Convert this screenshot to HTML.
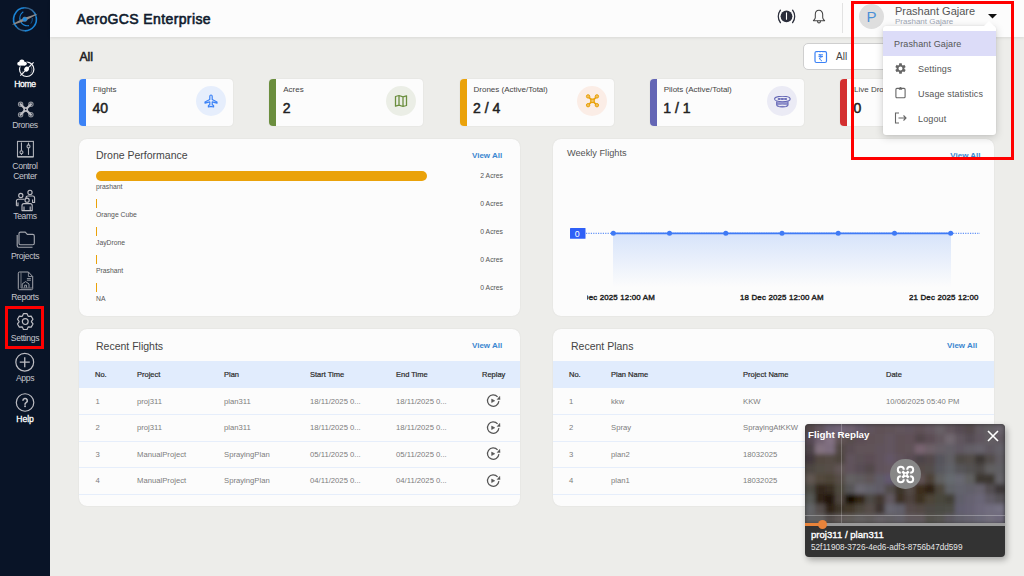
<!DOCTYPE html>
<html><head><meta charset="utf-8">
<style>
*{margin:0;padding:0;box-sizing:border-box}
html,body{width:1024px;height:576px;overflow:hidden}
body{position:relative;background:#ededea;font-family:"Liberation Sans",sans-serif;color:#333}
.a{position:absolute;white-space:nowrap}
#side{position:absolute;left:0;top:0;width:50px;height:576px;background:#091427}
.sl{position:absolute;left:0;width:50px;text-align:center;font-size:8.6px;color:#c6c6cc;line-height:10px;letter-spacing:-0.35px}
.sl.w{color:#fff;font-weight:bold}
#hdr{position:absolute;left:50px;top:0;width:974px;height:37px;background:#fcfcfc;box-shadow:0 1px 3px rgba(0,0,0,0.09)}
.card{position:absolute;top:79px;width:154px;height:47px;background:#fcfcfc;border-radius:4px;overflow:hidden;box-shadow:0 0 1.5px rgba(0,0,0,0.10)}
.card .bar{position:absolute;left:0;top:0;width:7px;height:47px}
.card .lb{position:absolute;left:14px;top:6px;font-size:8px;color:#444;white-space:nowrap}
.card .vl{position:absolute;left:13.5px;top:21.3px;font-size:14px;color:#222;-webkit-text-stroke:0.5px #222;white-space:nowrap}
.card .ic{position:absolute;left:117px;top:7px;width:30px;height:30px;border-radius:50%}
.pnl{position:absolute;background:#fcfcfc;border-radius:8px;overflow:hidden;box-shadow:0 0 1.5px rgba(0,0,0,0.10)}
.ptitle{position:absolute;font-size:10.5px;color:#444;white-space:nowrap}
.va{position:absolute;font-size:8px;font-weight:bold;color:#3a86d0;white-space:nowrap}
table{border-collapse:collapse}
.th{position:absolute;left:0;top:32px;height:27px;background:#e1ecfd}
.row{position:absolute;left:0;height:27px;border-bottom:1px solid #e6eefb}
.t{position:absolute;font-size:7.5px;white-space:nowrap}
.t.h{font-weight:normal;color:#2a2a2a;-webkit-text-stroke:0.2px #2a2a2a}
.t.d{color:#7c7c7c;font-size:7.7px}
.dl{font-size:6.8px;color:#555}
.dr{right:521px;font-size:6.8px;color:#555}
.xl{font-size:7.9px;color:#222;-webkit-text-stroke:0.4px #222;letter-spacing:0.17px}
.dd{font-size:9px;color:#555;letter-spacing:0.13px}
</style></head><body>

<!-- SIDEBAR -->
<div id="side">
  <svg class="a" style="left:8px;top:2px" width="34" height="34" viewBox="0 0 34 34">
    <defs>
      <linearGradient id="lgA" gradientUnits="userSpaceOnUse" x1="12" y1="6" x2="28" y2="14"><stop offset="0" stop-color="#1a84d6"/><stop offset="0.5" stop-color="#3c5c7e"/><stop offset="1" stop-color="#1a84d6"/></linearGradient>
      <linearGradient id="lgB" gradientUnits="userSpaceOnUse" x1="6" y1="24" x2="18" y2="30"><stop offset="0" stop-color="#1a84d6"/><stop offset="0.6" stop-color="#3c5c7e"/><stop offset="1" stop-color="#1a84d6"/></linearGradient>
    </defs>
    <path d="M8.8 25.3 A11.6 11.6 0 0 1 16.8 5.7" fill="none" stroke="#1a84d6" stroke-width="1.6"/>
    <path d="M16.8 5.7 A11.6 11.6 0 0 1 28.1 14.6" fill="none" stroke="url(#lgA)" stroke-width="1.5"/>
    <path d="M28.1 14.6 A11.6 11.6 0 0 1 17 28.85" fill="none" stroke="#1a84d6" stroke-width="1.6"/>
    <path d="M17 28.85 A11.6 11.6 0 0 1 8.8 25.3" fill="none" stroke="url(#lgB)" stroke-width="1.5"/>
    <path d="M15.3 9.8 A7.6 7.6 0 0 0 21 23.6" fill="none" stroke="#1a84d6" stroke-width="1.2"/>
    <path d="M22.8 21.6 A7.6 7.6 0 0 0 24.3 16" fill="none" stroke="#1a6fb5" stroke-width="1" opacity=".7"/>
    <path d="M3.90 22.80 L6.89 22.18 L14.55 19.67 L17.33 18.54 L20.07 17.32 L27.18 13.53 L29.70 11.80 L26.71 12.42 L19.05 14.93 L16.27 16.06 L13.53 17.28 L6.42 21.07z" fill="#8f8a87"/>
    <circle cx="16.8" cy="17.3" r="2.3" fill="#1f8ce0" stroke="#7d8a98" stroke-width="0.5"/>
  </svg>
  <!-- home -->
  <svg class="a" style="left:14px;top:56px" width="24" height="24" viewBox="0 0 24 24">
    <circle cx="12.7" cy="13.3" r="7.2" fill="none" stroke="#f2f2f4" stroke-width="1.2"/>
    <path d="M16.3 9.8 A5 5 0 0 1 16.5 17.2" fill="none" stroke="#aaa" stroke-width=".6"/>
    <path d="M8.2 15 A5 5 0 0 0 10 18" fill="none" stroke="#888" stroke-width=".5"/>
    <line x1="6.3" y1="19.6" x2="19.6" y2="6.3" stroke="#f2f2f4" stroke-width="1.1"/>
    <ellipse cx="12.6" cy="13.2" rx="2.6" ry="2.3" transform="rotate(-45 12.6 13.2)" fill="#fff"/>
    <g fill="#091427" stroke="#091427" stroke-width="1.6"><circle cx="5.2" cy="7.7" r="1.9"/><circle cx="7.9" cy="6.2" r="2.6"/><circle cx="10.9" cy="7.6" r="1.9"/><rect x="5.2" y="7.6" width="5.7" height="2"/></g>
    <g fill="#fff"><circle cx="5.2" cy="7.7" r="1.9"/><circle cx="7.9" cy="6.2" r="2.6"/><circle cx="10.9" cy="7.6" r="1.9"/><rect x="5.2" y="7.6" width="5.7" height="2"/></g>
  </svg>
  <div class="sl w" style="top:78.7px;font-size:8.6px;font-weight:normal;-webkit-text-stroke:0.3px #fff;letter-spacing:-0.3px">Home</div>
  <!-- drones -->
  <svg class="a" style="left:14px;top:98px" width="24" height="22" viewBox="0 0 24 22" fill="none">
    <g stroke="#8a8e96" stroke-width="1.1"><circle cx="6.6" cy="6.3" r="2.2"/><circle cx="16.9" cy="6.3" r="2.2"/><circle cx="6.6" cy="16.7" r="2.2"/><circle cx="16.9" cy="16.7" r="2.2"/></g>
    <path d="M6.6 6.3 L16.9 16.7 M16.9 6.3 L6.6 16.7" stroke="#bdbdc3" stroke-width="2.3" stroke-linecap="round"/>
    <rect x="9.4" y="9.2" width="4.6" height="4.6" rx="1.2" fill="#bdbdc3"/>
    <circle cx="11.7" cy="11.5" r=".8" fill="#091427"/>
  </svg>
  <div class="sl" style="top:120.2px">Drones</div>
  <!-- control center -->
  <svg class="a" style="left:14px;top:138px" width="24" height="22" viewBox="0 0 24 22" fill="none" stroke="#b0b2b9" stroke-width="1.1">
    <rect x="3.5" y="3.4" width="15.9" height="15.3"/>
    <path d="M3.5 18.9 H19.4" stroke-width="1.3"/>
    <line x1="7.45" y1="4.6" x2="7.45" y2="16.9"/><line x1="14.5" y1="4.6" x2="14.5" y2="16.9"/>
    <circle cx="7.45" cy="14.3" r="1.5" fill="#091427"/><circle cx="14.5" cy="8.4" r="1.5" fill="#091427"/>
  </svg>
  <div class="sl" style="top:160.7px;line-height:10px">Control<br>Center</div>
  <!-- teams -->
  <svg class="a" style="left:13px;top:186px" width="26" height="28" viewBox="0 0 26 28" fill="none" stroke="#bdbdc3" stroke-width="1.1" stroke-linejoin="round">
    <circle cx="7.8" cy="9.5" r="2.1"/><circle cx="17" cy="6.4" r="2.1"/>
    <path d="M3.4 19.8 V15.2 Q3.4 13.2 5.4 13.2 H11.5"/><path d="M3.4 19.8 H5 V16.6"/>
    <path d="M13 12.2 V11.9 Q13 10 15 10 H19.6 Q21.6 10 21.6 12 V16.5 H19.6 V13.4"/>
    <path d="M9 24.6 V19.6 Q9 17.6 11 17.6 H17.2 Q19.2 17.6 19.2 19.6 V24.6 Z" fill="#091427"/>
    <path d="M11 20.6 V24.6 M17.2 20.6 V24.6"/>
    <circle cx="14.1" cy="14.2" r="2.1" fill="#091427"/>
  </svg>
  <div class="sl" style="top:211.2px">Teams</div>
  <!-- projects -->
  <svg class="a" style="left:12px;top:226px" width="28" height="26" viewBox="0 0 28 26" fill="none" stroke="#a2a5ad" stroke-width="1.15" stroke-linejoin="round">
    <path d="M8.5 6.1 H13.3 L15.3 8.4 H20.8 Q22.3 8.4 22.3 9.9 V17.2 Q22.3 18.7 20.8 18.7 H8.5 Q7 18.7 7 17.2 V7.6 Q7 6.1 8.5 6.1 Z"/>
    <path d="M5.2 9 V19.7 Q5.2 21.2 6.7 21.2 H20.5"/>
  </svg>
  <div class="sl" style="top:251.2px">Projects</div>
  <!-- reports -->
  <svg class="a" style="left:14px;top:268px" width="24" height="26" viewBox="0 0 24 26" fill="none" stroke="#a4a6ad" stroke-width="1" stroke-linejoin="round">
    <path d="M5.5 4 H14.4 L18.7 8.5 V20.5 Q18.7 21.7 17.5 21.7 H5.5 Q4.3 21.7 4.3 20.5 V5.2 Q4.3 4 5.5 4 Z"/>
    <path d="M7 4.6 V20 H18.2" stroke-width=".8" stroke="#8d9098"/>
    <path d="M14.4 4.2 V8.5 H18.5" stroke-width=".8"/>
    <path d="M12.9 10.6 H16.9 M12.9 12.2 H16.9" stroke-width=".9"/>
    <path d="M8.2 19.6 V15.9 L11.6 13.6 L15 15.9 V19.6 M10.7 19.6 V17.2 H12.5 V19.6" stroke-width=".9"/>
  </svg>
  <div class="sl" style="top:292.2px">Reports</div>
  <!-- settings -->
  <div class="a" style="left:5px;top:306px;width:39px;height:43px;border:3px solid #ff0000"></div>
  <svg class="a" style="left:14px;top:310px" width="23" height="23" viewBox="0 0 23 23" fill="none" stroke="#bdbdc3" stroke-width="1.2" stroke-linejoin="round">
    <path d="M8.44 6.08 L9.43 3.71 L13.07 3.71 L14.06 6.08 L14.63 6.40 L17.17 6.08 L19.00 9.23 L17.44 11.28 L17.44 11.92 L19.00 13.97 L17.17 17.12 L14.63 16.80 L14.06 17.12 L13.07 19.49 L9.43 19.49 L8.44 17.12 L7.87 16.80 L5.33 17.12 L3.50 13.97 L5.06 11.92 L5.06 11.28 L3.50 9.23 L5.33 6.08 L7.87 6.40z"/>
    <circle cx="11.25" cy="11.6" r="2.9"/>
  </svg>
  <div class="sl" style="top:333.2px">Settings</div>
  <!-- apps -->
  <svg class="a" style="left:14px;top:351px" width="22" height="22" viewBox="0 0 22 22" fill="none" stroke="#bdbdc3" stroke-width="1.2">
    <circle cx="10.75" cy="11.2" r="8.9"/><path d="M10.75 6.2v10M5.75 11.2h10" stroke-width="1.3"/>
  </svg>
  <div class="sl" style="top:373.2px">Apps</div>
  <!-- help -->
  <svg class="a" style="left:14px;top:392px" width="22" height="22" viewBox="0 0 22 22" fill="none" stroke="#bdbdc3" stroke-width="1.2">
    <circle cx="11.05" cy="10.5" r="8.75"/>
    <path d="M8.9 8.7a2.2 2.2 0 1 1 3.2 1.95c-.65.35-1.05.8-1.05 1.6v.45" stroke-width="1.6"/>
    <circle cx="11.05" cy="14.3" r=".95" fill="#bdbdc3" stroke="none"/>
  </svg>
  <div class="sl w" style="top:413.7px;font-size:8.6px;font-weight:normal;-webkit-text-stroke:0.3px #fff;letter-spacing:-0.1px">Help</div>
</div>

<!-- HEADER -->
<div id="hdr"></div>
<div class="a" style="left:76.5px;top:11px;font-size:14px;color:#0f1b2d;-webkit-text-stroke:0.6px #0f1b2d;letter-spacing:0.38px">AeroGCS Enterprise</div>

<!-- MAIN CONTENT -->
<div class="a" style="left:79.5px;top:50px;font-size:12.3px;color:#222;-webkit-text-stroke:0.55px #222;letter-spacing:-0.1px">All</div>


<!-- header right -->
<svg class="a" style="left:776px;top:8px" width="21" height="17" viewBox="0 0 21 17">
  <path d="M4.4 2.2 A10.4 10.4 0 0 0 4.4 14.6" fill="none" stroke="#2a2d3a" stroke-width="1.35" stroke-linecap="round"/>
  <path d="M16.6 2.2 A10.4 10.4 0 0 1 16.6 14.6" fill="none" stroke="#2a2d3a" stroke-width="1.35" stroke-linecap="round"/>
  <circle cx="10.5" cy="8.3" r="5.9" fill="#2a2d3a"/>
  <path d="M10.5 4.9 V11.2" stroke="#fff" stroke-width="1.1" stroke-linecap="round"/>
</svg>
<svg class="a" style="left:811px;top:8px" width="16" height="16" viewBox="0 0 16 16" fill="none" stroke="#444" stroke-width="1.05" stroke-linejoin="round">
  <path d="M8 2.3 C5.6 2.3 4.3 4.2 4.3 6.6 V9.4 C4.3 10.8 3.3 11.6 2.4 12.7 H13.6 C12.7 11.6 11.7 10.8 11.7 9.4 V6.6 C11.7 4.2 10.4 2.3 8 2.3z"/>
  <path d="M6.6 12.8 V13.5 a1.4 1.4 0 0 0 2.8 0 V12.8"/>
</svg>
<div class="a" style="left:842px;top:3px;width:1px;height:30px;background:#e2e2e2"></div>
<div class="a" style="left:859px;top:4px;width:25px;height:25px;border-radius:50%;background:#dedede;color:#4a8fd6;font-size:15px;text-align:center;line-height:25px">P</div>
<div class="a" style="left:895px;top:5px;font-size:11px;color:#555">Prashant Gajare</div>
<div class="a" style="left:895px;top:17px;font-size:8px;color:#9ea6b4">Prashant Gajare</div>
<svg class="a" style="left:988px;top:14px" width="9" height="5" viewBox="0 0 9 5"><path d="M0 0h9L4.5 4.5z" fill="#111"/></svg>

<!-- date filter button -->
<div class="a" style="left:803px;top:43px;width:150px;height:26.5px;border:1px solid #cfcfcf;border-radius:5px;background:#fff"></div>
<svg class="a" style="left:814px;top:50px" width="14" height="14" viewBox="0 0 14 14" fill="none" stroke="#3b82f6" stroke-width="1.2">
  <rect x="1" y="1.5" width="11.5" height="11" rx="1.5"/>
  <path d="M3 1 v1.5 M6 1 v1.5 M9 1 v1.5 M11 1 v1.5" stroke-width="0.8"/>
  <path d="M4.5 4.8 h4.5 M4.5 6.6 h4.5 M5 4.8 c3 0 3 3.6 0 3.6 l3 2.8" stroke-width="1"/>
</svg>
<div class="a" style="left:836px;top:51px;font-size:10px;color:#444">All</div>

<!-- stat cards -->
<div class="card" style="left:79px"><div class="bar" style="background:#3b82f6"></div><div class="lb">Flights</div><div class="vl">40</div>
  <div class="ic" style="background:#e6eefc"><svg class="a" style="left:8px;top:8px" width="14" height="14" viewBox="0 0 14 14" fill="none" stroke="#3b82f6" stroke-width="1.2" stroke-linejoin="round"><path d="M7 1 c.8 0 1.2.7 1.2 1.5 V5.5 L13 8 v1.2 l-4.8-1.3 v2.6 l1.4 1.2 V13 L7 12.3 4.4 13 v-1.3 l1.4-1.2 V7.9 L1 9.2 V8 l4.8-2.5 V2.5 C5.8 1.7 6.2 1 7 1z"/></svg></div></div>
<div class="card" style="left:269.25px"><div class="bar" style="background:#6b8e3e"></div><div class="lb">Acres</div><div class="vl">2</div>
  <div class="ic" style="background:#ebeee6"><svg class="a" style="left:8px;top:8px" width="14" height="14" viewBox="0 0 14 14" fill="none" stroke="#6b8e3e" stroke-width="1.3" stroke-linejoin="round"><path d="M1.5 2.5 l3.5-1 4 1.3 3.5-1 v9.7 l-3.5 1-4-1.3-3.5 1z M5 1.5 v9.7 M9 2.8 v9.7"/></svg></div></div>
<div class="card" style="left:459.5px"><div class="bar" style="background:#eaa20a"></div><div class="lb">Drones (Active/Total)</div><div class="vl">2 / 4</div>
  <div class="ic" style="background:#fbede6"><svg class="a" style="left:7px;top:7px" width="17" height="16" viewBox="0 0 17 16" fill="none" stroke="#eaa20a"><path d="M4.3 3.6 L12.7 12 M12.7 3.6 L4.3 12" stroke-width="1.7"/><g fill="#f0bf5c" stroke-width="1"><circle cx="4.1" cy="3.4" r="1.7"/><circle cx="12.9" cy="3.4" r="1.7"/><circle cx="4.1" cy="12.2" r="1.7"/><circle cx="12.9" cy="12.2" r="1.7"/></g><rect x="6.8" y="6.1" width="3.4" height="3.4" stroke-width="1.2" fill="#f0c66c"/></svg></div></div>
<div class="card" style="left:649.75px"><div class="bar" style="background:#6466b5"></div><div class="lb">Pilots (Active/Total)</div><div class="vl">1 / 1</div>
  <div class="ic" style="background:#ebebf5"><svg class="a" style="left:6px;top:9.5px" width="18" height="13" viewBox="0 0 18 13" fill="none" stroke="#6466b5" stroke-width="1.1"><path d="M3.7 5.6 V8.8 Q3.7 10.9 9.35 10.9 Q15 10.9 15 8.8 V5.6" fill="#b0b1dc"/><path d="M3.9 7 H14.8 M3.9 8.1 H14.8" stroke-width=".6" stroke="#6466b5"/><path d="M5.6 9.7 Q9.35 8.9 13.1 9.7" stroke="#ebebf5" stroke-width="1.1"/><ellipse cx="9.35" cy="3" rx="7.8" ry="2.7" fill="#ebebf5"/><rect x="4.6" y="2" width="9.5" height="2" rx="1" fill="#7072bb" stroke="none"/><circle cx="7.7" cy="3" r=".55" fill="#ebebf5" stroke="none"/><circle cx="11" cy="3" r=".55" fill="#ebebf5" stroke="none"/></svg></div></div>
<div class="card" style="left:840px"><div class="bar" style="background:#d32f2f"></div><div class="lb">Live Drones</div><div class="vl">0</div></div>


<!-- Drone Performance -->
<div class="pnl" style="left:79px;top:139px;width:440.5px;height:177px"></div>
<div class="ptitle" style="left:96px;top:149px">Drone Performance</div>
<div class="va" style="left:472px;top:151px">View All</div>
<div class="a" style="left:96px;top:171px;width:331px;height:10px;border-radius:5px;background:#eaa20a"></div>
<div class="a" style="left:96px;top:199px;width:1px;height:9px;background:#eaa20a"></div>
<div class="a" style="left:96px;top:227px;width:1px;height:9px;background:#eaa20a"></div>
<div class="a" style="left:96px;top:255px;width:1px;height:9px;background:#eaa20a"></div>
<div class="a" style="left:96px;top:283px;width:1px;height:9px;background:#eaa20a"></div>
<div class="a dl" style="left:96px;top:183px">prashant</div>
<div class="a dl" style="left:96px;top:211px">Orange Cube</div>
<div class="a dl" style="left:96px;top:239px">JayDrone</div>
<div class="a dl" style="left:96px;top:267px">Prashant</div>
<div class="a dl" style="left:96px;top:295px">NA</div>
<div class="a dr" style="top:172px">2 Acres</div>
<div class="a dr" style="top:200px">0 Acres</div>
<div class="a dr" style="top:228px">0 Acres</div>
<div class="a dr" style="top:256px">0 Acres</div>
<div class="a dr" style="top:284px">0 Acres</div>

<!-- Weekly Flights -->
<div class="pnl" style="left:553.3px;top:139px;width:440.5px;height:177px"></div>
<div class="a" style="left:567px;top:148px;font-size:9.2px;color:#555">Weekly Flights</div>
<div class="va" style="left:950.3px;top:151px">View All</div>
<svg class="a" style="left:553px;top:139px" width="441" height="177" viewBox="0 0 441 177">
  <defs><linearGradient id="gr" x1="0" y1="0" x2="0" y2="1"><stop offset="0" stop-color="#d6e3fa"/><stop offset="1" stop-color="#fcfcfc"/></linearGradient></defs>
  <rect x="60" y="94" width="338" height="54" fill="url(#gr)"/>
  <line x1="33" y1="94.3" x2="427" y2="94.3" stroke="#3f7af5" stroke-width="1" stroke-dasharray="1.2 1.2"/>
  <line x1="60" y1="94.3" x2="398" y2="94.3" stroke="#3f7af5" stroke-width="1.8"/>
  <g fill="#3f7af5"><circle cx="60.3" cy="94.3" r="2.5"/><circle cx="116.5" cy="94.3" r="2.5"/><circle cx="172.8" cy="94.3" r="2.5"/><circle cx="229" cy="94.3" r="2.5"/><circle cx="285.2" cy="94.3" r="2.5"/><circle cx="341.5" cy="94.3" r="2.5"/><circle cx="397.7" cy="94.3" r="2.5"/></g>
  <rect x="17" y="89" width="15.5" height="10.8" rx="0.5" fill="#2f60f7"/>
  <text x="24.2" y="97.6" font-size="8.8" fill="#fff" text-anchor="middle" font-family="Liberation Sans">0</text>
</svg>
<div class="a" style="left:587px;top:290.8px;width:68px;height:14px;overflow:hidden"><div class="a xl" style="right:0;top:2px">18 Dec 2025 12:00 AM</div></div>
<div class="a xl" style="left:740px;top:292.8px">18 Dec 2025 12:00 AM</div>
<div class="a xl" style="left:909px;top:292.8px;width:70px;overflow:hidden">21 Dec 2025 12:00 AM</div>

<!-- Recent Flights -->
<div class="pnl" style="left:79px;top:329px;width:440.5px;height:177px">
  <div class="th" style="width:441px"></div>
  <div class="row" style="top:59px;width:441px"></div>
  <div class="row" style="top:86px;width:441px"></div>
  <div class="row" style="top:112px;width:441px"></div>
  <div class="row" style="top:139px;width:441px"></div>
</div>
<div class="ptitle" style="left:96px;top:340px">Recent Flights</div>
<div class="va" style="left:472px;top:341px">View All</div>


<div class="t h" style="left:95px;top:370px">No.</div>
<div class="t h" style="left:137px;top:370px">Project</div>
<div class="t h" style="left:224px;top:370px">Plan</div>
<div class="t h" style="left:310px;top:370px">Start Time</div>
<div class="t h" style="left:396px;top:370px">End Time</div>
<div class="t h" style="left:482px;top:370px">Replay</div>
<div class="t d" style="left:95.5px;top:396.5px">1</div><div class="t d" style="left:137px;top:396.5px">proj311</div><div class="t d" style="left:224px;top:396.5px">plan311</div><div class="t d" style="left:310px;top:396.5px">18/11/2025 0...</div><div class="t d" style="left:396px;top:396.5px">18/11/2025 0...</div><svg class="a" style="left:486px;top:394px" width="15" height="14" viewBox="0 0 15 14" fill="none" stroke="#555" stroke-width="1.25"><path d="M12.88 7.1 A5.7 5.7 0 1 1 11.57 2.94"/><path d="M11.1 5.6 L14.1 5.6 L13.8 2.2z" fill="#555" stroke="#555" stroke-width="0.4" stroke-linejoin="round"/><path d="M5.6 5 L5.6 8.6 L8.8 6.8z" fill="#555" stroke="#555" stroke-width="0.5" stroke-linejoin="round"/></svg>
<div class="t d" style="left:95.5px;top:423.1px">2</div><div class="t d" style="left:137px;top:423.1px">proj311</div><div class="t d" style="left:224px;top:423.1px">plan311</div><div class="t d" style="left:310px;top:423.1px">18/11/2025 0...</div><div class="t d" style="left:396px;top:423.1px">18/11/2025 0...</div><svg class="a" style="left:486px;top:420.6px" width="15" height="14" viewBox="0 0 15 14" fill="none" stroke="#555" stroke-width="1.25"><path d="M12.88 7.1 A5.7 5.7 0 1 1 11.57 2.94"/><path d="M11.1 5.6 L14.1 5.6 L13.8 2.2z" fill="#555" stroke="#555" stroke-width="0.4" stroke-linejoin="round"/><path d="M5.6 5 L5.6 8.6 L8.8 6.8z" fill="#555" stroke="#555" stroke-width="0.5" stroke-linejoin="round"/></svg>
<div class="t d" style="left:95.5px;top:449.7px">3</div><div class="t d" style="left:137px;top:449.7px">ManualProject</div><div class="t d" style="left:224px;top:449.7px">SprayingPlan</div><div class="t d" style="left:310px;top:449.7px">05/11/2025 0...</div><div class="t d" style="left:396px;top:449.7px">05/11/2025 0...</div><svg class="a" style="left:486px;top:447.2px" width="15" height="14" viewBox="0 0 15 14" fill="none" stroke="#555" stroke-width="1.25"><path d="M12.88 7.1 A5.7 5.7 0 1 1 11.57 2.94"/><path d="M11.1 5.6 L14.1 5.6 L13.8 2.2z" fill="#555" stroke="#555" stroke-width="0.4" stroke-linejoin="round"/><path d="M5.6 5 L5.6 8.6 L8.8 6.8z" fill="#555" stroke="#555" stroke-width="0.5" stroke-linejoin="round"/></svg>
<div class="t d" style="left:95.5px;top:476.3px">4</div><div class="t d" style="left:137px;top:476.3px">ManualProject</div><div class="t d" style="left:224px;top:476.3px">SprayingPlan</div><div class="t d" style="left:310px;top:476.3px">04/11/2025 0...</div><div class="t d" style="left:396px;top:476.3px">04/11/2025 0...</div><svg class="a" style="left:486px;top:473.8px" width="15" height="14" viewBox="0 0 15 14" fill="none" stroke="#555" stroke-width="1.25"><path d="M12.88 7.1 A5.7 5.7 0 1 1 11.57 2.94"/><path d="M11.1 5.6 L14.1 5.6 L13.8 2.2z" fill="#555" stroke="#555" stroke-width="0.4" stroke-linejoin="round"/><path d="M5.6 5 L5.6 8.6 L8.8 6.8z" fill="#555" stroke="#555" stroke-width="0.5" stroke-linejoin="round"/></svg>

<!-- Recent Plans -->
<div class="pnl" style="left:553.3px;top:329px;width:440.5px;height:177px">
  <div class="th" style="width:441px"></div>
  <div class="row" style="top:59px;width:441px"></div>
  <div class="row" style="top:86px;width:441px"></div>
  <div class="row" style="top:112px;width:441px"></div>
  <div class="row" style="top:139px;width:441px"></div>
</div>
<div class="ptitle" style="left:571px;top:340px">Recent Plans</div>
<div class="va" style="left:947px;top:341px">View All</div>
<div class="t h" style="left:569px;top:370px">No.</div>
<div class="t h" style="left:611px;top:370px">Plan Name</div>
<div class="t h" style="left:743px;top:370px">Project Name</div>
<div class="t h" style="left:886px;top:370px">Date</div>
<div class="t d" style="left:569px;top:396.5px">1</div><div class="t d" style="left:611px;top:396.5px">kkw</div><div class="t d" style="left:743px;top:396.5px">KKW</div><div class="t d" style="left:886px;top:396.5px">10/06/2025 05:40 PM</div>
<div class="t d" style="left:569px;top:423.1px">2</div><div class="t d" style="left:611px;top:423.1px">Spray</div><div class="t d" style="left:743px;top:423.1px">SprayingAtKKW</div>
<div class="t d" style="left:569px;top:449.7px">3</div><div class="t d" style="left:611px;top:449.7px">plan2</div><div class="t d" style="left:743px;top:449.7px">18032025</div>
<div class="t d" style="left:569px;top:476.3px">4</div><div class="t d" style="left:611px;top:476.3px">plan1</div><div class="t d" style="left:743px;top:476.3px">18032025</div>

<!-- dropdown -->
<div class="a" style="left:883px;top:26px;width:113px;height:109px;background:#fff;border-radius:3px;box-shadow:0 2px 8px rgba(0,0,0,0.18), 0 0 2px rgba(0,0,0,0.08)"></div>
<svg class="a" style="left:982px;top:20px" width="14" height="7" viewBox="0 0 14 7"><path d="M1 7 L7 1 L13 7z" fill="#fff"/></svg>
<div class="a" style="left:883px;top:31px;width:113px;height:25px;background:#dcdcf8"></div>
<div class="a dd" style="left:894px;top:39px">Prashant Gajare</div>
<svg class="a" style="left:893.5px;top:61.5px" width="13" height="13" viewBox="0 0 24 24"><path fill="#666" d="M19.14 12.94c.04-.3.06-.61.06-.94 0-.32-.02-.64-.07-.94l2.03-1.58a.49.49 0 0 0 .12-.61l-1.92-3.32a.49.49 0 0 0-.59-.22l-2.39.96c-.5-.38-1.030-.7-1.62-.94l-.36-2.54a.48.48 0 0 0-.48-.41h-3.84c-.24 0-.43.17-.47.41l-.36 2.54c-.59.24-1.13.57-1.62.94l-2.390-.96c-.22-.08-.47 0-.59.22L2.74 8.87c-.12.21-.08.47.12.61l2.03 1.58c-.05.3-.09.63-.09.94s.2.64.07.94l-2.03 1.58a.49.49 0 0 0-.12.61l1.92 3.32c.12.22.37.29.59.22l2.39-.96c.5.38 1.030.7 1.62.94l.36 2.54c.05.24.24.41.48.41h3.84c.24 0 .44-.17.47-.41l.36-2.54c.59-.24 1.13-.56 1.62-.94l2.39.96c.22.08.47 0 .59-.22l1.92-3.32c.12-.22.07-.47-.12-.61l-2.010-1.58zM12 15.6c-1.98 0-3.6-1.62-3.6-3.6s1.62-3.6 3.6-3.6 3.6 1.62 3.6 3.6-1.62 3.6-3.6 3.6z"/></svg>
<div class="a dd" style="left:918px;top:64px">Settings</div>
<svg class="a" style="left:894px;top:86px" width="13" height="13" viewBox="0 0 13 13" fill="none" stroke="#666" stroke-width="1.1"><rect x="1.9" y="2.4" width="9.2" height="9.4" rx="1"/><path d="M5 3.2 V2.2 h3 v1z" fill="#666" stroke-width=".9"/><circle cx="6.5" cy="1.6" r=".7" fill="#666" stroke="none"/></svg>
<div class="a dd" style="left:918px;top:89px">Usage statistics</div>
<svg class="a" style="left:894px;top:112px" width="13" height="12" viewBox="0 0 13 12" fill="none" stroke="#666" stroke-width="1.1"><path d="M5 1 H1.5 v10 H5"/><path d="M4.5 6 h7.5 M9.5 3.5 l2.5 2.5 -2.5 2.5"/></svg>
<div class="a dd" style="left:918px;top:114px">Logout</div>

<!-- red box -->
<div class="a" style="left:851px;top:1px;width:163px;height:159px;border:3px solid #ff0000"></div>

<!-- flight replay -->
<div class="a" style="left:805px;top:424px;width:200px;height:133px;border-radius:4px;overflow:hidden;background:#333;box-shadow:2px 3px 6px rgba(0,0,0,0.3)">
  <svg class="a" style="left:0;top:0" width="200" height="100" viewBox="0 0 200 100"><defs><filter id="bl" x="-10%" y="-10%" width="120%" height="120%"><feGaussianBlur stdDeviation="1.9" edgeMode="duplicate"/></filter></defs><g filter="url(#bl)"><rect x="0" y="0" width="10" height="10" fill="#53464a"/><rect x="10" y="0" width="10" height="10" fill="#60535b"/><rect x="20" y="0" width="10" height="10" fill="#6a5e71"/><rect x="30" y="0" width="10" height="10" fill="#716477"/><rect x="40" y="0" width="10" height="10" fill="#6e606f"/><rect x="50" y="0" width="10" height="10" fill="#645766"/><rect x="60" y="0" width="10" height="10" fill="#60535b"/><rect x="70" y="0" width="10" height="10" fill="#5e5157"/><rect x="80" y="0" width="10" height="10" fill="#605359"/><rect x="90" y="0" width="10" height="10" fill="#62555b"/><rect x="100" y="0" width="10" height="10" fill="#60535b"/><rect x="110" y="0" width="10" height="10" fill="#5e5157"/><rect x="120" y="0" width="10" height="10" fill="#64575e"/><rect x="130" y="0" width="10" height="10" fill="#686066"/><rect x="140" y="0" width="10" height="10" fill="#60555b"/><rect x="150" y="0" width="10" height="10" fill="#574c53"/><rect x="160" y="0" width="10" height="10" fill="#53494c"/><rect x="170" y="0" width="10" height="10" fill="#60595e"/><rect x="180" y="0" width="10" height="10" fill="#645e64"/><rect x="190" y="0" width="10" height="10" fill="#68626a"/><rect x="0" y="10" width="10" height="10" fill="#574a55"/><rect x="10" y="10" width="10" height="10" fill="#716271"/><rect x="20" y="10" width="10" height="10" fill="#827182"/><rect x="30" y="10" width="10" height="10" fill="#605355"/><rect x="40" y="10" width="10" height="10" fill="#594e4e"/><rect x="50" y="10" width="10" height="10" fill="#5b4e55"/><rect x="60" y="10" width="10" height="10" fill="#5e5157"/><rect x="70" y="10" width="10" height="10" fill="#605359"/><rect x="80" y="10" width="10" height="10" fill="#62555e"/><rect x="90" y="10" width="10" height="10" fill="#5e5157"/><rect x="100" y="10" width="10" height="10" fill="#605159"/><rect x="110" y="10" width="10" height="10" fill="#53464c"/><rect x="120" y="10" width="10" height="10" fill="#5b4e55"/><rect x="130" y="10" width="10" height="10" fill="#64595e"/><rect x="140" y="10" width="10" height="10" fill="#71686f"/><rect x="150" y="10" width="10" height="10" fill="#60575e"/><rect x="160" y="10" width="10" height="10" fill="#574e55"/><rect x="170" y="10" width="10" height="10" fill="#60575e"/><rect x="180" y="10" width="10" height="10" fill="#645e64"/><rect x="190" y="10" width="10" height="10" fill="#605960"/><rect x="0" y="20" width="10" height="10" fill="#4e4449"/><rect x="10" y="20" width="10" height="10" fill="#82717f"/><rect x="20" y="20" width="10" height="10" fill="#7d6d7e"/><rect x="30" y="20" width="10" height="10" fill="#534944"/><rect x="40" y="20" width="10" height="10" fill="#5a4e53"/><rect x="50" y="20" width="10" height="10" fill="#605359"/><rect x="60" y="20" width="10" height="10" fill="#605359"/><rect x="70" y="20" width="10" height="10" fill="#60535b"/><rect x="80" y="20" width="10" height="10" fill="#62555e"/><rect x="90" y="20" width="10" height="10" fill="#5e5157"/><rect x="100" y="20" width="10" height="10" fill="#605359"/><rect x="110" y="20" width="10" height="10" fill="#77646f"/><rect x="120" y="20" width="10" height="10" fill="#6d6068"/><rect x="130" y="20" width="10" height="10" fill="#665e66"/><rect x="140" y="20" width="10" height="10" fill="#645e66"/><rect x="150" y="20" width="10" height="10" fill="#605962"/><rect x="160" y="20" width="10" height="10" fill="#645e66"/><rect x="170" y="20" width="10" height="10" fill="#66626a"/><rect x="180" y="20" width="10" height="10" fill="#5e5960"/><rect x="190" y="20" width="10" height="10" fill="#646068"/><rect x="0" y="30" width="10" height="10" fill="#42373c"/><rect x="10" y="30" width="10" height="10" fill="#534942"/><rect x="20" y="30" width="10" height="10" fill="#554c44"/><rect x="30" y="30" width="10" height="10" fill="#4e443c"/><rect x="40" y="30" width="10" height="10" fill="#60535b"/><rect x="50" y="30" width="10" height="10" fill="#5b5157"/><rect x="60" y="30" width="10" height="10" fill="#5b4e55"/><rect x="70" y="30" width="10" height="10" fill="#60535b"/><rect x="80" y="30" width="10" height="10" fill="#645766"/><rect x="90" y="30" width="10" height="10" fill="#60535b"/><rect x="100" y="30" width="10" height="10" fill="#5a4e55"/><rect x="110" y="30" width="10" height="10" fill="#4e444a"/><rect x="120" y="30" width="10" height="10" fill="#534a4c"/><rect x="130" y="30" width="10" height="10" fill="#57555b"/><rect x="140" y="30" width="10" height="10" fill="#605e64"/><rect x="150" y="30" width="10" height="10" fill="#4e4a44"/><rect x="160" y="30" width="10" height="10" fill="#534e4a"/><rect x="170" y="30" width="10" height="10" fill="#3d3935"/><rect x="180" y="30" width="10" height="10" fill="#534e4c"/><rect x="190" y="30" width="10" height="10" fill="#605b62"/><rect x="0" y="40" width="10" height="10" fill="#4e4642"/><rect x="10" y="40" width="10" height="10" fill="#534e44"/><rect x="20" y="40" width="10" height="10" fill="#574e46"/><rect x="30" y="40" width="10" height="10" fill="#605555"/><rect x="40" y="40" width="10" height="10" fill="#60535b"/><rect x="50" y="40" width="10" height="10" fill="#594e55"/><rect x="60" y="40" width="10" height="10" fill="#53494c"/><rect x="70" y="40" width="10" height="10" fill="#60535b"/><rect x="80" y="40" width="10" height="10" fill="#64575e"/><rect x="90" y="40" width="10" height="10" fill="#60555e"/><rect x="100" y="40" width="10" height="10" fill="#534a46"/><rect x="110" y="40" width="10" height="10" fill="#554c49"/><rect x="120" y="40" width="10" height="10" fill="#534e4c"/><rect x="130" y="40" width="10" height="10" fill="#59595e"/><rect x="140" y="40" width="10" height="10" fill="#606268"/><rect x="150" y="40" width="10" height="10" fill="#575559"/><rect x="160" y="40" width="10" height="10" fill="#535151"/><rect x="170" y="40" width="10" height="10" fill="#4e4a46"/><rect x="180" y="40" width="10" height="10" fill="#605e60"/><rect x="190" y="40" width="10" height="10" fill="#605e64"/><rect x="0" y="50" width="10" height="10" fill="#605751"/><rect x="10" y="50" width="10" height="10" fill="#53493c"/><rect x="20" y="50" width="10" height="10" fill="#4e4437"/><rect x="30" y="50" width="10" height="10" fill="#574e46"/><rect x="40" y="50" width="10" height="10" fill="#646062"/><rect x="50" y="50" width="10" height="10" fill="#605b5e"/><rect x="60" y="50" width="10" height="10" fill="#5e5759"/><rect x="70" y="50" width="10" height="10" fill="#605b66"/><rect x="80" y="50" width="10" height="10" fill="#62596f"/><rect x="90" y="50" width="10" height="10" fill="#605566"/><rect x="100" y="50" width="10" height="10" fill="#605566"/><rect x="110" y="50" width="10" height="10" fill="#605355"/><rect x="120" y="50" width="10" height="10" fill="#4e4237"/><rect x="130" y="50" width="10" height="10" fill="#606060"/><rect x="140" y="50" width="10" height="10" fill="#666a6f"/><rect x="150" y="50" width="10" height="10" fill="#686871"/><rect x="160" y="50" width="10" height="10" fill="#606060"/><rect x="170" y="50" width="10" height="10" fill="#3d3733"/><rect x="180" y="50" width="10" height="10" fill="#3d3733"/><rect x="190" y="50" width="10" height="10" fill="#646266"/><rect x="0" y="60" width="10" height="10" fill="#4e4c44"/><rect x="10" y="60" width="10" height="10" fill="#30281d"/><rect x="20" y="60" width="10" height="10" fill="#382d20"/><rect x="30" y="60" width="10" height="10" fill="#4e493c"/><rect x="40" y="60" width="10" height="10" fill="#575557"/><rect x="50" y="60" width="10" height="10" fill="#6a6871"/><rect x="60" y="60" width="10" height="10" fill="#64626a"/><rect x="70" y="60" width="10" height="10" fill="#605b66"/><rect x="80" y="60" width="10" height="10" fill="#534e4c"/><rect x="90" y="60" width="10" height="10" fill="#3d352a"/><rect x="100" y="60" width="10" height="10" fill="#534944"/><rect x="110" y="60" width="10" height="10" fill="#3d2d1b"/><rect x="120" y="60" width="10" height="10" fill="#2d2013"/><rect x="130" y="60" width="10" height="10" fill="#4e463d"/><rect x="140" y="60" width="10" height="10" fill="#606266"/><rect x="150" y="60" width="10" height="10" fill="#64646d"/><rect x="160" y="60" width="10" height="10" fill="#62606a"/><rect x="170" y="60" width="10" height="10" fill="#66626d"/><rect x="180" y="60" width="10" height="10" fill="#534e51"/><rect x="190" y="60" width="10" height="10" fill="#3d3737"/><rect x="0" y="70" width="10" height="10" fill="#575955"/><rect x="10" y="70" width="10" height="10" fill="#2d2117"/><rect x="20" y="70" width="10" height="10" fill="#21170c"/><rect x="30" y="70" width="10" height="10" fill="#4e443c"/><rect x="40" y="70" width="10" height="10" fill="#140a00"/><rect x="50" y="70" width="10" height="10" fill="#302619"/><rect x="60" y="70" width="10" height="10" fill="#4e4944"/><rect x="70" y="70" width="10" height="10" fill="#423933"/><rect x="80" y="70" width="10" height="10" fill="#60595e"/><rect x="90" y="70" width="10" height="10" fill="#3d3326"/><rect x="100" y="70" width="10" height="10" fill="#4e423c"/><rect x="110" y="70" width="10" height="10" fill="#3d3021"/><rect x="120" y="70" width="10" height="10" fill="#4e4439"/><rect x="130" y="70" width="10" height="10" fill="#4a463c"/><rect x="140" y="70" width="10" height="10" fill="#423f39"/><rect x="150" y="70" width="10" height="10" fill="#605e6a"/><rect x="160" y="70" width="10" height="10" fill="#666271"/><rect x="170" y="70" width="10" height="10" fill="#6a6677"/><rect x="180" y="70" width="10" height="10" fill="#605b66"/><rect x="190" y="70" width="10" height="10" fill="#575359"/><rect x="0" y="80" width="10" height="10" fill="#626466"/><rect x="10" y="80" width="10" height="10" fill="#554e4c"/><rect x="20" y="80" width="10" height="10" fill="#2d2117"/><rect x="30" y="80" width="10" height="10" fill="#3d352a"/><rect x="40" y="80" width="10" height="10" fill="#42372a"/><rect x="50" y="80" width="10" height="10" fill="#4e463d"/><rect x="60" y="80" width="10" height="10" fill="#574e49"/><rect x="70" y="80" width="10" height="10" fill="#3d3533"/><rect x="80" y="80" width="10" height="10" fill="#686671"/><rect x="90" y="80" width="10" height="10" fill="#62606a"/><rect x="100" y="80" width="10" height="10" fill="#574c4c"/><rect x="110" y="80" width="10" height="10" fill="#534a44"/><rect x="120" y="80" width="10" height="10" fill="#4e4944"/><rect x="130" y="80" width="10" height="10" fill="#4c4c44"/><rect x="140" y="80" width="10" height="10" fill="#4e4e46"/><rect x="150" y="80" width="10" height="10" fill="#625e6f"/><rect x="160" y="80" width="10" height="10" fill="#666273"/><rect x="170" y="80" width="10" height="10" fill="#6d687a"/><rect x="180" y="80" width="10" height="10" fill="#716d7e"/><rect x="190" y="80" width="10" height="10" fill="#757182"/><rect x="0" y="90" width="10" height="10" fill="#606062"/><rect x="10" y="90" width="10" height="10" fill="#605e5e"/><rect x="20" y="90" width="10" height="10" fill="#534e4c"/><rect x="30" y="90" width="10" height="10" fill="#5e5957"/><rect x="40" y="90" width="10" height="10" fill="#605b59"/><rect x="50" y="90" width="10" height="10" fill="#646060"/><rect x="60" y="90" width="10" height="10" fill="#605b5b"/><rect x="70" y="90" width="10" height="10" fill="#666266"/><rect x="80" y="90" width="10" height="10" fill="#625e64"/><rect x="90" y="90" width="10" height="10" fill="#646068"/><rect x="100" y="90" width="10" height="10" fill="#60595b"/><rect x="110" y="90" width="10" height="10" fill="#60595b"/><rect x="120" y="90" width="10" height="10" fill="#53514c"/><rect x="130" y="90" width="10" height="10" fill="#575551"/><rect x="140" y="90" width="10" height="10" fill="#5b5960"/><rect x="150" y="90" width="10" height="10" fill="#62606a"/><rect x="160" y="90" width="10" height="10" fill="#66646f"/><rect x="170" y="90" width="10" height="10" fill="#6a6877"/><rect x="180" y="90" width="10" height="10" fill="#716d7c"/><rect x="190" y="90" width="10" height="10" fill="#6d687a"/></g></svg>
  <div class="a" style="left:36px;top:0;width:1px;height:100px;background:rgba(255,255,255,0.22)"></div>
  <div class="a" style="left:0;top:91px;width:200px;height:1px;background:rgba(255,255,255,0.28)"></div>
  <div class="a" style="left:85px;top:34.5px;width:30.5px;height:30.5px;border-radius:50%;background:#878787"></div>
  <svg class="a" style="left:90.5px;top:41px" width="19" height="19" viewBox="0 0 19 19" fill="none" stroke="#fff" stroke-width="2"><path d="M7.8 4.8 A3 3 0 1 0 4.8 7.8"/><path d="M14.2 7.8 A3 3 0 1 0 11.2 4.8"/><path d="M4.8 11.2 A3 3 0 1 0 7.8 14.2"/><path d="M11.2 14.2 A3 3 0 1 0 14.2 11.2"/><path d="M6.3 6.3 L12.7 12.7 M12.7 6.3 L6.3 12.7" stroke-width="2.6"/><rect x="7.3" y="7.3" width="4.4" height="4.4" fill="#fff" stroke="none"/><rect x="8.7" y="8.7" width="1.6" height="1.6" fill="#888" stroke="none"/></svg>
  <div class="a" style="left:0;top:99px;width:200px;height:3px;background:#9a9a9a"></div>
  <div class="a" style="left:0;top:99px;width:18px;height:3px;background:#e8833a"></div>
  <div class="a" style="left:13px;top:96px;width:9px;height:9px;border-radius:50%;background:#e8833a"></div>
  <div class="a" style="left:3px;top:4.5px;font-size:9.8px;font-weight:bold;color:#fff">Flight Replay</div>
  <svg class="a" style="left:182px;top:6px" width="12" height="12" viewBox="0 0 12 12" stroke="#fff" stroke-width="1.6"><path d="M1 1 L11 11 M11 1 L1 11"/></svg>
  <div class="a" style="left:6px;top:105px;font-size:9.6px;color:#fff;-webkit-text-stroke:0.35px #fff">proj311 / plan311</div>
  <div class="a" style="left:6px;top:119px;font-size:8.2px;color:#e6e6e6">52f11908-3726-4ed6-adf3-8756b47dd599</div>
</div>

</body></html>
